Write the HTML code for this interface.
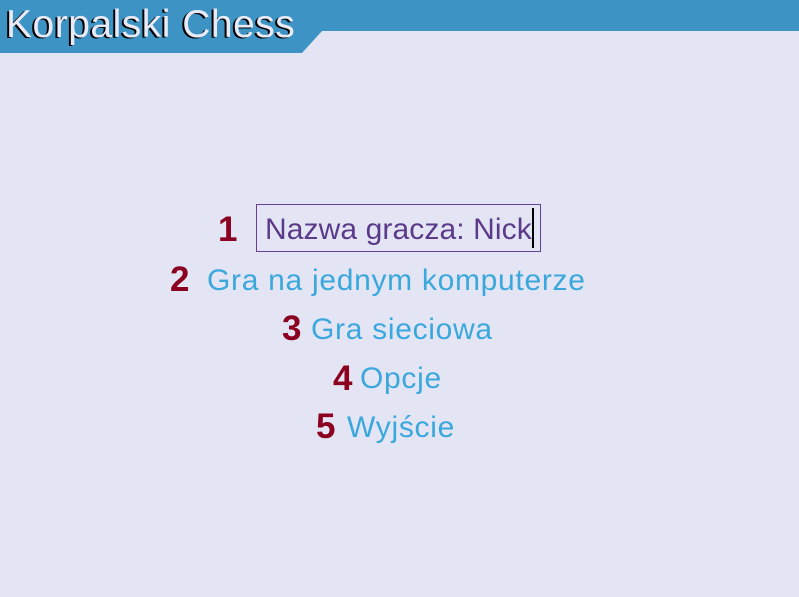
<!DOCTYPE html>
<html><head><meta charset="utf-8"><style>
html,body{margin:0;padding:0;width:799px;height:597px;overflow:hidden;background:#e4e5f4;font-family:"Liberation Sans","DejaVu Sans",sans-serif}
.a{position:absolute;white-space:nowrap;line-height:1}
.n{color:#8b0020;font-weight:bold;font-size:35px}
.t{color:#3aa8dc;font-size:30px;letter-spacing:0.7px}
</style></head><body>
<svg style="position:absolute;left:0;top:0" width="799" height="60">
<polygon points="0,0 799,0 799,31 322,31 302,53 0,53" fill="#3d94c4"/>
</svg>
<div class="a" style="left:6px;top:5px;font-size:39px;letter-spacing:0.5px;color:#e8eaf8;text-shadow:-2px 1px 0 #000">Korpalski Chess</div>
<div class="a n" style="left:218px;top:212px">1</div>
<div style="position:absolute;left:256px;top:204px;width:283px;height:46px;border:1px solid #6a3d96"></div>
<div class="a" style="left:265px;top:215px;font-size:30px;letter-spacing:0.1px;color:#5b3a8a">Nazwa gracza: Nick</div>
<div style="position:absolute;left:532px;top:208px;width:2px;height:40px;background:#000"></div>
<div class="a n" style="left:170px;top:262px">2</div>
<div class="a t" style="left:207px;top:266px">Gra na jednym komputerze</div>
<div class="a n" style="left:282px;top:311px">3</div>
<div class="a t" style="left:311px;top:315px">Gra sieciowa</div>
<div class="a n" style="left:333px;top:361px">4</div>
<div class="a t" style="left:360px;top:364px">Opcje</div>
<div class="a n" style="left:316px;top:409px">5</div>
<div class="a t" style="left:347px;top:413px">Wyjście</div>
</body></html>
